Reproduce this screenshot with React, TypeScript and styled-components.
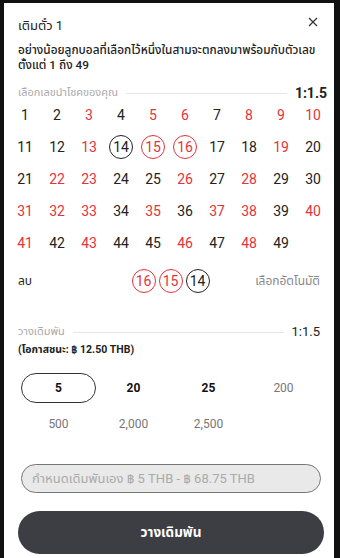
import React, { useState } from "react";
import styled, { createGlobalStyle } from "styled-components";

const GlobalStyle = createGlobalStyle`
  html, body {
    margin: 0;
    padding: 0;
    background: #111;
  }
  body {
    font-family: Roboto, "Noto Sans Thai", "Noto Sans", sans-serif;
  }
`;

const Sheet = styled.div`
  margin: 3px 6px 0 4px;
  width: 330px;
  height: 555px;
  overflow: hidden;
  background: #fff;
  box-sizing: border-box;
  padding: 14px 14px 0 14px;
  display: flex;
  flex-direction: column;
  color: #222;
`;

const Header = styled.div`
  display: flex;
  justify-content: space-between;
  align-items: center;
  height: 18px;
  line-height: 18px;
`;

const Title = styled.div`
  font-size: 13px;
  color: #222;
`;

const Close = styled.button`
  border: none;
  background: none;
  padding: 0;
  width: 14px;
  height: 14px;
  display: flex;
  align-items: center;
  justify-content: center;
  margin-top: -8px;
  cursor: pointer;
`;

const Desc = styled.p`
  margin: 8px 0 0 0;
  font-size: 11.8px;
  line-height: 15px;
  font-weight: 500;
  color: #222;
  white-space: nowrap;
`;

const SectionHead = styled.div<{ $top: number }>`
  display: flex;
  align-items: center;
  margin-top: ${(p) => p.$top}px;
  height: 14px;
  line-height: 14px;
  gap: 8px;
`;

const SectionLabel = styled.span`
  font-size: 11px;
  color: #aaa;
  white-space: nowrap;
`;

const Rule = styled.div`
  flex: 1;
  height: 1px;
  background: #e6e6e6;
`;

const Odds = styled.span<{ $bold?: boolean }>`
  font-size: ${(p) => (p.$bold ? 14 : 13)}px;
  font-weight: ${(p) => (p.$bold ? 700 : 400)};
  color: #222;
  margin-right: ${(p) => (p.$bold ? -7 : 0)}px;
`;

const Grid = styled.div`
  display: grid;
  grid-template-columns: repeat(10, 32px);
  grid-auto-rows: 32px;
  margin: -1px 0 0 -9px;
`;

const Cell = styled.div`
  display: flex;
  align-items: center;
  justify-content: center;
`;

const Ball = styled.div<{ $red: boolean; $picked: boolean }>`
  width: 24px;
  height: 24px;
  line-height: 24px;
  box-sizing: border-box;
  border-radius: 50%;
  display: flex;
  align-items: center;
  justify-content: center;
  font-size: 14px;
  color: ${(p) => (p.$red ? "#e5323b" : "#222")};
  border: ${(p) =>
    p.$picked ? `1.3px solid ${p.$red ? "#e5323b" : "#222"}` : "none"};
  cursor: pointer;
`;

const ActionRow = styled.div`
  display: flex;
  align-items: center;
  justify-content: space-between;
  margin-top: 10px;
  height: 24px;
  line-height: 24px;
`;

const Delete = styled.span`
  font-size: 12px;
  color: #222;
  width: 90px;
`;

const Picked = styled.div`
  display: flex;
  gap: 3px;
  margin-left: 3px;
`;

const Auto = styled.span`
  font-size: 12px;
  color: #888;
  width: 90px;
  text-align: right;
`;

const Chance = styled.div`
  font-size: 10.5px;
  line-height: 14px;
  font-weight: 700;
  color: #222;
  margin-top: 4px;
`;

const Chips = styled.div`
  display: grid;
  grid-template-columns: repeat(4, 75px);
  grid-auto-rows: 30px;
  row-gap: 6px;
  margin: 16px 0 0 3px;
`;

const Chip = styled.button<{ $active: boolean; $strong: boolean }>`
  border: ${(p) => (p.$active ? "1.3px solid #333" : "1px solid transparent")};
  border-radius: 15px;
  background: #fff;
  font-family: inherit;
  font-size: 12px;
  font-weight: ${(p) => (p.$strong ? 700 : 400)};
  color: ${(p) => (p.$strong ? "#111" : "#777")};
  padding: 0;
  cursor: pointer;
`;

const Amount = styled.input`
  margin: 25px 0 0 3px;
  width: 300px;
  height: 29px;
  box-sizing: border-box;
  border: 1px solid #777;
  border-radius: 15px;
  background: #e9e9e9;
  padding: 0 10px;
  font-family: inherit;
  font-size: 13px;
  color: #333;
  outline: none;
  &::placeholder {
    color: #aaa;
  }
`;

const Submit = styled.button`
  margin: 18px 0 0 0;
  width: 306px;
  height: 43px;
  flex-shrink: 0;
  border: none;
  border-radius: 22px;
  background: #3d3e43;
  color: #fff;
  font-family: inherit;
  font-size: 13.5px;
  font-weight: 700;
  cursor: pointer;
`;

const RED = new Set([3, 5, 6, 8, 9, 10, 13, 15, 16, 19, 22, 23, 26, 28, 31, 32, 33, 35, 37, 38, 40, 41, 43, 46, 48]);

const CHIPS = [
  { v: "5", strong: true },
  { v: "20", strong: true },
  { v: "25", strong: true },
  { v: "200", strong: false },
  { v: "500", strong: false },
  { v: "2,000", strong: false },
  { v: "2,500", strong: false },
];

export default function App() {
  const [picked, setPicked] = useState<number[]>([16, 15, 14]);
  const [chip, setChip] = useState("5");

  const toggle = (n: number) =>
    setPicked((cur) =>
      cur.includes(n) ? cur.filter((x) => x !== n) : cur.length < 3 ? [n, ...cur] : cur
    );

  return (
    <>
      <GlobalStyle />
      <Sheet>
        <Header>
          <Title>เติมตั๋ว 1</Title>
          <Close aria-label="close">
            <svg width="10" height="10" viewBox="0 0 10 10">
              <path d="M1 1L9 9M9 1L1 9" stroke="#333" strokeWidth="1.2" />
            </svg>
          </Close>
        </Header>
        <Desc>
          อย่างน้อยลูกบอลที่เลือกไว้หนึ่งในสามจะตกลงมาพร้อมกับตัวเลข
          <br />
          ตั้งแต่ 1 ถึง 49
        </Desc>

        <SectionHead $top={13}>
          <SectionLabel>เลือกเลขนำโชคของคุณ</SectionLabel>
          <Rule />
          <Odds $bold>1:1.5</Odds>
        </SectionHead>

        <Grid>
          {Array.from({ length: 49 }, (_, i) => i + 1).map((n) => (
            <Cell key={n}>
              <Ball $red={RED.has(n)} $picked={picked.includes(n)} onClick={() => toggle(n)}>
                {n}
              </Ball>
            </Cell>
          ))}
        </Grid>

        <ActionRow>
          <Delete onClick={() => setPicked([])}>ลบ</Delete>
          <Picked>
            {picked.map((n) => (
              <Ball key={n} $red={RED.has(n)} $picked>
                {n}
              </Ball>
            ))}
          </Picked>
          <Auto>เลือกอัตโนมัติ</Auto>
        </ActionRow>

        <SectionHead $top={32}>
          <SectionLabel>วางเดิมพัน</SectionLabel>
          <Rule />
          <Odds>1:1.5</Odds>
        </SectionHead>
        <Chance>(โอกาสชนะ: ฿ 12.50 THB)</Chance>

        <Chips>
          {CHIPS.map((c) => (
            <Chip key={c.v} $active={chip === c.v} $strong={c.strong} onClick={() => setChip(c.v)}>
              {c.v}
            </Chip>
          ))}
        </Chips>

        <Amount placeholder="กำหนดเดิมพันเอง ฿ 5 THB - ฿ 68.75 THB" />
        <Submit>วางเดิมพัน</Submit>
      </Sheet>
    </>
  );
}
